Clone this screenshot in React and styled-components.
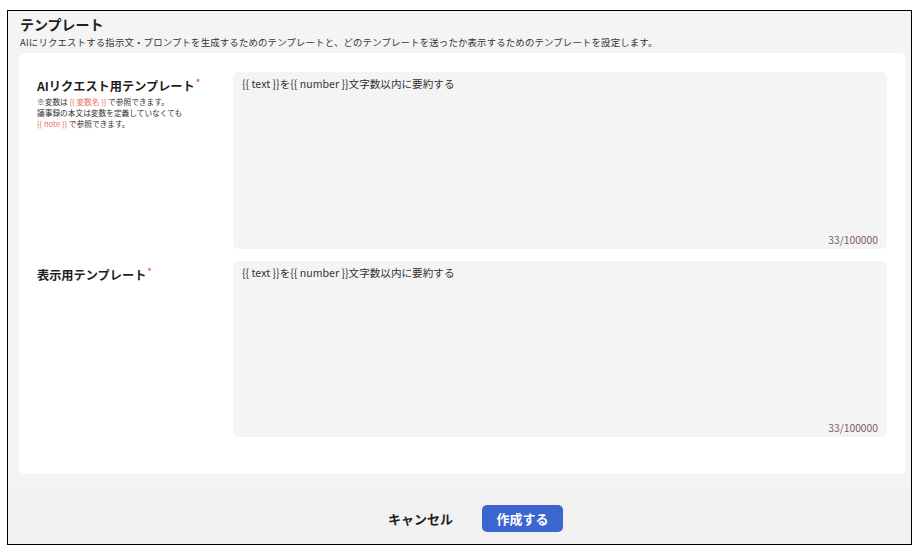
import React from "react";
import styled, { createGlobalStyle } from "styled-components";

const GlobalStyle = createGlobalStyle`
  html, body {
    margin: 0;
    padding: 0;
    background: #ffffff;
  }
  body {
    font-family: "Noto Sans CJK JP", "Noto Sans", sans-serif;
    color: #222;
  }
`;

const FONT = `"Noto Sans CJK JP", "Noto Sans", sans-serif`;

// outer frame of the dialog / page section
const Frame = styled.div`
  box-sizing: border-box;
  margin: 10px 0 0 7px;
  width: 905px;
  height: 535px;
  border: 1px solid #000;
  background: #f4f4f4;
  display: flex;
  flex-direction: column;
`;

const Header = styled.div`
  padding: 3px 0 0 12px;
`;

const Title = styled.h1`
  margin: 0;
  font-family: ${FONT};
  font-size: 14px;
  line-height: 20px;
  font-weight: 700;
  color: #1e1e1e;
`;

const Description = styled.p`
  margin: 1px 0 0;
  font-family: ${FONT};
  font-size: 9.4px;
  line-height: 14px;
  color: #333;
  letter-spacing: 0.02em;
`;

const Card = styled.section`
  box-sizing: border-box;
  margin: 4px 5px 0 11px;
  padding: 19px 19px 37px 18px;
  background: #fff;
  border-radius: 6px;
  display: flex;
  flex-direction: column;
  gap: 12px;
`;

const Row = styled.div`
  display: grid;
  grid-template-columns: 196px 1fr;
`;

const LabelCol = styled.div`
  padding-top: 2px;
`;

const Label = styled.div`
  font-family: ${FONT};
  font-size: 12.2px;
  line-height: 18px;
  font-weight: 700;
  color: #1e1e1e;
`;

const Required = styled.span`
  color: #e8664f;
  font-size: 9px;
  vertical-align: 5px;
  margin-left: 1px;
`;

const Note = styled.div`
  margin-top: 1px;
  font-family: ${FONT};
  font-size: 7.7px;
  line-height: 11px;
  color: #333;
`;

const Var = styled.span`
  color: #ea6e55;
`;

const Field = styled.div`
  height: ${(p) => p.$height}px;
  box-sizing: border-box;
  background: #f4f4f4;
  border-radius: 6px;
  display: flex;
  flex-direction: column;
  padding: 3px 9px 2px 9px;
`;

const TextArea = styled.textarea`
  flex: 1;
  border: none;
  outline: none;
  resize: none;
  background: transparent;
  padding: 0;
  margin: 0;
  font-family: ${FONT};
  font-size: 10.6px;
  line-height: 17px;
  color: #333;
`;

const Counter = styled.div`
  text-align: right;
  font-family: ${FONT};
  font-size: 10.3px;
  line-height: 15px;
  color: #7b5c5c;
`;

const Footer = styled.div`
  margin-top: 15px;
  flex: 1;
  background: #f1f1f1;
  display: flex;
  justify-content: center;
  align-items: flex-start;
  padding: 16px 0 0 16px;
  gap: 13px;
`;

const CancelButton = styled.button`
  border: none;
  background: transparent;
  padding: 0 16px;
  height: 27px;
  font-family: ${FONT};
  font-size: 13px;
  font-weight: 700;
  color: #1e1e1e;
  cursor: pointer;
`;

const PrimaryButton = styled.button`
  border: none;
  background: #3b66cf;
  border-radius: 5px;
  width: 81px;
  height: 27px;
  font-family: ${FONT};
  font-size: 13px;
  font-weight: 700;
  color: #fff;
  cursor: pointer;
`;

const TEMPLATE = "{{ text }}を{{ number }}文字数以内に要約する";

function TemplateField({ height }) {
  return (
    <Field $height={height}>
      <TextArea defaultValue={TEMPLATE} />
      <Counter>{TEMPLATE.length}/100000</Counter>
    </Field>
  );
}

export default function App() {
  return (
    <>
      <GlobalStyle />
      <Frame>
        <Header>
          <Title>テンプレート</Title>
          <Description>
            AIにリクエストする指示文・プロンプトを生成するためのテンプレートと、どのテンプレートを送ったか表示するためのテンプレートを設定します。
          </Description>
        </Header>
        <Card>
          <Row>
            <LabelCol>
              <Label>
                AIリクエスト用テンプレート<Required>*</Required>
              </Label>
              <Note>
                ※変数は <Var>{"{{ 変数名 }}"}</Var> で参照できます。
                <br />
                議事録の本文は変数を定義していなくても
                <br />
                <Var>{"{{ note }}"}</Var> で参照できます。
              </Note>
            </LabelCol>
            <TemplateField height={177} />
          </Row>
          <Row>
            <LabelCol>
              <Label>
                表示用テンプレート<Required>*</Required>
              </Label>
            </LabelCol>
            <TemplateField height={176} />
          </Row>
        </Card>
        <Footer>
          <CancelButton>キャンセル</CancelButton>
          <PrimaryButton>作成する</PrimaryButton>
        </Footer>
      </Frame>
    </>
  );
}
